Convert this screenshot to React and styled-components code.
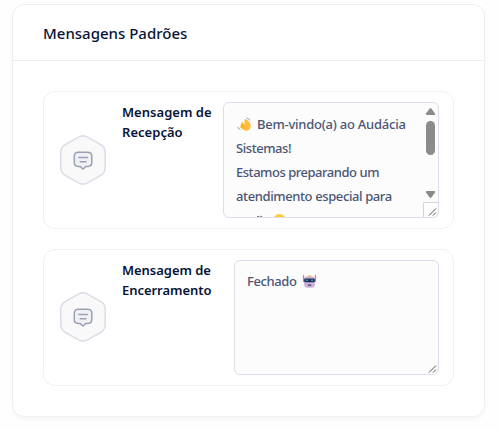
import React from "react";
import styled, { createGlobalStyle } from "styled-components";

const GlobalStyle = createGlobalStyle`
  * { box-sizing: border-box; }
  body { margin: 0; background: #fefefe; font-family: "Open Sans", "Noto Sans", sans-serif; }
`;

const Page = styled.main`
  width: 500px;
  height: 430px;
  padding: 4px 15px 13px 12px;
  overflow: hidden;
`;

const Card = styled.section`
  height: 413px;
  border: 1px solid #efeff1;
  border-radius: 12px;
  background: #fff;
  box-shadow: 0 3px 4px rgba(0, 0, 0, 0.03);
`;

const CardHeader = styled.header`
  height: 56px;
  display: flex;
  align-items: center;
  padding: 0 30px;
  border-bottom: 1px solid #efeff1;
`;

const Title = styled.h3`
  margin: 0;
  font-family: "Noto Sans", sans-serif;
  font-size: 15px;
  line-height: 20px;
  font-weight: 500;
  color: #071437;
`;

const CardBody = styled.div`
  display: flex;
  flex-direction: column;
  gap: 20px;
  padding: 30px;
`;

const Item = styled.article`
  height: ${(p) => p.$height}px;
  display: flex;
  align-items: flex-start;
  padding: 10px 14px 10px 16px;
  border: 1px solid #f1f1f2;
  border-radius: 12px;
`;

const HexBadge = styled.svg`
  flex: none;
  margin-top: ${(p) => p.$top}px;
  width: 46px;
  height: 50px;
`;

const Label = styled.label`
  flex: 1;
  margin-left: 16px;
  font-family: "Noto Sans", sans-serif;
  font-size: 13px;
  line-height: 20px;
  font-weight: 600;
  letter-spacing: ${(p) => p.$spacing}px;
  color: #071437;
  white-space: pre-line;
`;

const Field = styled.div`
  flex: none;
  display: flex;
  width: ${(p) => p.$width}px;
  height: ${(p) => p.$height}px;
  border: 1px solid #dbdfe9;
  border-radius: 6px;
  background: #fcfcfc;
  overflow: hidden;
  position: relative;
`;

const Content = styled.div`
  flex: 1;
  padding: ${(p) => p.$top}px 0 0 12px;
  font-family: "Noto Sans", sans-serif;
  font-size: 13px;
  line-height: 24px;
  font-weight: 500;
  color: #4b5675;
  white-space: nowrap;
`;

const Line = styled.div`
  display: flex;
  align-items: center;
  height: 24px;
  letter-spacing: ${(p) => p.$spacing || 0}px;
`;

const Emoji = styled.svg`
  flex: none;
  width: 15px;
  height: 15px;
  margin: ${(p) => p.$margin || "0"};
`;

const Scrollbar = styled.svg`
  flex: none;
  width: 15px;
  height: 100px;
`;

const Grip = styled.svg`
  position: absolute;
  right: 0;
  bottom: 0;
  width: 15px;
  height: 15px;
`;

const MessageIcon = ({ top }) => (
  <HexBadge viewBox="0 0 46 50" fill="none" $top={top}>
    <path
      d="M18.5 2.1 Q23 -.3 27.5 2.1 L41 9.8 Q45.2 12.4 45.2 17.2 V32.8 Q45.2 37.6 41 40.2 L27.5 47.9 Q23 50.3 18.5 47.9 L5 40.2 Q.8 37.6 .8 32.8 V17.2 Q.8 12.4 5 9.8Z"
      fill="#f9f9f9" stroke="#dbdfe9" strokeWidth="1.6"
    />
    <path
      d="M18.3 17.2 H27.7 Q31.8 17.2 31.8 21.2 V27.5 Q31.8 31.4 27.7 31.4 H25.7 L23.7 33.5 Q23 34.2 22.3 33.5 L20.3 31.4 H18.3 Q14.3 31.4 14.3 27.5 V21.2 Q14.3 17.2 18.3 17.2Z"
      fill="#f1f1f4" stroke="#99a1b7" strokeWidth="1.5" strokeLinejoin="round"
    />
    <path d="M18.8 22.5h8.6M20.3 26.8h5.7" stroke="#99a1b7" strokeWidth="1.4" strokeLinecap="round" />
  </HexBadge>
);

const Wave = () => (
  <Emoji viewBox="0 0 15 15" $margin="0 5px 0 1px" fill="none">
    <path d="M8.2 2.2Q9 1.5 9.8 2.4L12.7 5.6Q13.8 7 13.7 9.2 13.6 12.5 10.6 13.5 8 14.2 6 12.6L3 10.2Q2.4 9.3 3.6 8.9L4.1 8.6 3.6 7.6Q3.6 6.6 4.6 6.8L4.7 5.4Q5.2 4.6 6 5.2L6.4 7.1 7.6 7.4 7.4 3.8Q7.5 2.8 8.2 2.2Z" fill="#ffbd3a" />
    <path d="m5 7 2.6 2.5M4.2 8.8l2.4 2" stroke="#e58b20" strokeWidth=".7" />
    <path d="M9.6 1Q12.2 1.2 12.8 3.5M.8 9.8Q1.2 12 3.4 12.6" stroke="#79abc8" strokeWidth="1" />
  </Emoji>
);

const House = () => (
  <Emoji viewBox="0 0 15 15" $margin="2px 3px 0 18px">
    <path d="M2 6 7 1.5 13 7 11.8 8 7 4 3 7.5Z" fill="#a86b64" />
    <path d="M3 2h2v3H3z" fill="#6283a0" />
    <path d="M4 7 7 4.4 11 7.8V13H4Z" fill="#e7d9ce" />
  </Emoji>
);

const Smile = () => (
  <Emoji viewBox="0 0 15 15">
    <circle cx="7.5" cy="7.5" r="6.5" fill="#ffc83d" />
    <path d="M4 9q3.5 4 7 0" fill="none" stroke="#7d4a22" />
  </Emoji>
);

const Robot = () => (
  <Emoji viewBox="0 0 15 15" $margin="0 0 0 5px">
    <path d="M1.5 1v7M13.5 1v7" stroke="#e5709c" strokeWidth="1.2" />
    <path d="M2 3.5Q7.5 .8 13 3.5V10Q13 13.8 9.8 13.8H5.2Q2 13.8 2 10Z" fill="#cdb4de" />
    <path d="M5 2.7Q7.5-.3 10 2.7Z" fill="#f9b02e" />
    <rect x="2.2" y="4.6" width="10.6" height="3.6" rx="1.2" fill="#243052" />
    <path d="M4 5.6h2v1.5H4zM9 5.6h2v1.5H9z" fill="#2d9bd2" />
    <rect x="5.7" y="10.5" width="3.6" height="1.2" rx=".5" fill="#493653" />
  </Emoji>
);

const ResizeGrip = ({ boxed }) => (
  <Grip viewBox="0 0 15 15" fill="none">
    {boxed && <path d="M.5 15V.5H15" stroke="#d5d5d5" fill="#fff" />}
    <path d="m6 13.5 7-7M10 13.5l3-3" stroke="#444" strokeWidth=".9" />
  </Grip>
);

export default function App() {
  return (
    <>
      <GlobalStyle />
      <Page>
        <Card>
          <CardHeader><Title>Mensagens Padrões</Title></CardHeader>
          <CardBody>
            <Item $height={138}>
              <MessageIcon top={33} />
              <Label $spacing={0.03}>{"Mensagem de\nRecepção"}</Label>
              <Field $width={216} $height={116} role="textbox">
                <Content $top={9}>
                  <Line $spacing={-0.24}><Wave />Bem-vindo(a) ao Audácia</Line>
                  <Line $spacing={-0.45}>Sistemas!</Line>
                  <Line $spacing={-0.47}>Estamos preparando um</Line>
                  <Line $spacing={-0.39}>atendimento especial para</Line>
                  <Line><House /><Smile /></Line>
                </Content>
                <Scrollbar viewBox="0 0 15 100" fill="#8b8b8b">
                  <path d="M6.5 5.7Q7.5 4.5 8.5 5.7L11.9 10.3Q12.5 12 11.5 12H3.5Q2.5 12 3.1 10.3Z" />
                  <rect x="3" y="18" width="9" height="34" rx="4.5" />
                  <path d="M3.5 88h8Q12.5 88 11.9 89.7L8.5 94.3Q7.5 95.5 6.5 94.3L3.1 89.7Q2.5 88 3.5 88Z" />
                </Scrollbar>
                <ResizeGrip boxed />
              </Field>
            </Item>
            <Item $height={137}>
              <MessageIcon top={32} />
              <Label $spacing={-0.04}>{"Mensagem de\nEncerramento"}</Label>
              <Field $width={205} $height={115} role="textbox">
                <Content $top={8}><Line $spacing={-0.4}>Fechado<Robot /></Line></Content>
                <ResizeGrip />
              </Field>
            </Item>
          </CardBody>
        </Card>
      </Page>
    </>
  );
}
